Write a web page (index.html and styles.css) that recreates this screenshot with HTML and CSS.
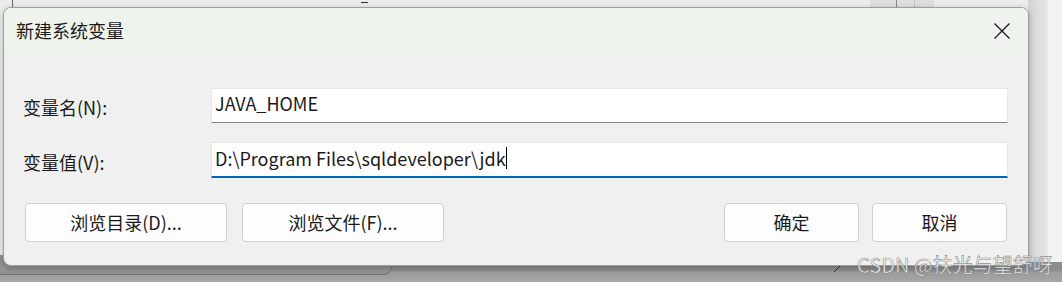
FILE: index.html
```html
<!DOCTYPE html>
<html lang="zh-CN">
<head>
<meta charset="utf-8">
<title>新建系统变量</title>
<link rel="stylesheet" href="styles.css">
</head>
<body>
<div class="desk">
  <div class="bg-top">
    <span class="bg-line"></span>
    <span class="bg-dash"></span>
    <span class="bg-block"><i></i><i></i></span>
  </div>
  <div class="bg-right"></div>
  <div class="bg-bottom"></div>
  <div class="bg-win"></div>
  <span class="grip"></span>

  <div class="dialog">
    <div class="titlebar">
      <span class="title">新建系统变量</span>
      <svg class="close" width="18" height="18" viewBox="0 0 18 18"><path d="M1.5 1.5 L16.5 16.5 M16.5 1.5 L1.5 16.5" stroke="#1a1a1a" stroke-width="1.3" fill="none"/></svg>
    </div>
    <div class="body">
      <div class="form">
        <label class="label">变量名(N):</label>
        <div class="input">JAVA_HOME</div>
        <label class="label">变量值(V):</label>
        <div class="input focus">D:\Program Files\sqldeveloper\jdk<span class="caret"></span></div>
      </div>
      <div class="buttons">
        <button class="btn wide">浏览目录(D)...</button>
        <button class="btn wide">浏览文件(F)...</button>
        <button class="btn narrow push">确定</button>
        <button class="btn narrow">取消</button>
      </div>
    </div>
  </div>

  <div class="watermark">CSDN @扶光与望舒呀</div>
</div>
</body>
</html>
```

FILE: styles.css
```css
* { box-sizing: border-box; }
html, body { margin: 0; padding: 0; }
body {
  width: 1062px;
  height: 282px;
  overflow: hidden;
  font-family: "Noto Sans CJK SC", "Noto Sans", sans-serif;
  color: #1a1a1a;
}
.desk {
  position: relative;
  width: 1062px;
  height: 282px;
  background: #a2a2a2;
}
.bg-top {
  position: absolute;
  left: 0; top: 0;
  width: 1062px; height: 265px;
  background: #ececec;
}
.bg-line {
  position: absolute;
  left: 12px; top: 0;
  width: 1px; height: 7px;
  background: #6a6a6a;
}
.bg-dash {
  position: absolute;
  left: 361px; top: 2px;
  width: 7px; height: 1px;
  background: #333;
}
.bg-block {
  position: absolute;
  left: 870px; top: 0;
  width: 64px; height: 8px;
  background: #dedede;
}
.bg-block i {
  position: absolute;
  top: 0; width: 1px; height: 8px;
  background: #888;
}
.bg-block i:first-child { left: 26px; }
.bg-block i:last-child { left: 44px; background: #c4c4c4; }
.bg-right {
  position: absolute;
  left: 1028px; top: 0;
  width: 34px; height: 262px;
  background: linear-gradient(to right, #d4d4d4, #e6e6e6 55%, #f1f1f1 60%, #f3f3f3);
}
.bg-bottom {
  position: absolute;
  left: 0; top: 262px;
  width: 1062px; height: 20px;
  background: linear-gradient(to bottom, #8a8a8a 0, #8f8f8f 9px, #9c9c9c 10px, #a5a5a5 20px);
}
.bg-win {
  position: absolute;
  left: 0; top: 255px;
  width: 392px; height: 20px;
  border-radius: 0 0 8px 0;
  background: #939393;
  border-bottom: 1px solid #6f6f6f;
  border-right: 1px solid #7a7a7a;
}
.grip {
  position: absolute;
  left: 834px; top: 264px;
  width: 8px; height: 8px;
  background: linear-gradient(135deg, transparent 45%, #333 45%, #333 55%, transparent 55%);
}
.dialog {
  position: absolute;
  left: 3px; top: 7px;
  width: 1026px; height: 259px;
  border: 1px solid #9e9e9e;
  border-radius: 8px;
  background: #f0f0f0;
  overflow: hidden;
  display: flex;
  flex-direction: column;
  box-shadow: 0 2px 6px rgba(0,0,0,0.25);
}
.titlebar {
  height: 44px;
  flex: none;
  background: #eef3ee;
  display: flex;
  align-items: center;
  justify-content: space-between;
  padding: 0 17px 0 12px;
}
.title {
  font-size: 18px;
  line-height: 1;
  color: #1a1a1a;
  padding-bottom: 1px;
}
.close { display: block; margin-top: 1px; }
.body {
  flex: 1;
  padding: 36px 20px 0 19px;
  display: flex;
  flex-direction: column;
}
.form {
  display: grid;
  grid-template-columns: 188px 1fr;
  row-gap: 19px;
  align-items: center;
}
.label {
  font-size: 18px;
  line-height: 1;
  padding-top: 3px;
}
.input {
  height: 35px;
  background: #ffffff;
  border: 1px solid #e6e6e6;
  border-bottom: 1px solid #848484;
  font-size: 18px;
  line-height: 31px;
  padding: 0 0 4px 3px;
  white-space: nowrap;
  display: flex;
  align-items: center;
}
.input.focus {
  height: 36px;
  border-bottom: 2px solid #0067c0;
  padding-bottom: 3px;
}
.caret {
  display: inline-block;
  width: 1px;
  height: 22px;
  background: #000;
  margin-left: 0;
}
.buttons {
  display: flex;
  margin-top: 25px;
  padding-left: 2px;
  padding-right: 1px;
}
.btn {
  height: 39px;
  background: #fdfdfd;
  border: 1px solid #d0d0d0;
  border-radius: 4px;
  font-family: inherit;
  font-size: 18px;
  color: #1a1a1a;
  padding: 0 0 2px;
  line-height: 1;
}
.btn.wide { width: 202px; margin-right: 15px; }
.btn.narrow { width: 135px; }
.btn.push { margin-left: auto; margin-right: 13px; }
.watermark {
  position: absolute;
  left: 857px; top: 251px;
  font-size: 20px;
  line-height: 28px;
  color: rgba(255,255,255,0.85);
  -webkit-text-stroke: 0.6px rgba(110,110,110,0.8);
  white-space: nowrap;
}
```
